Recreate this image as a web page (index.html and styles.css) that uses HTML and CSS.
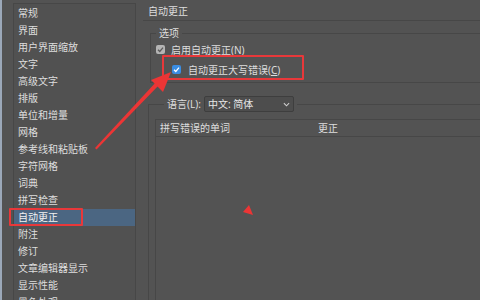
FILE: index.html
```html
<!DOCTYPE html>
<html lang="zh-CN">
<head>
  <meta charset="UTF-8">
  <title>首选项 - 自动更正</title>
  <link rel="stylesheet" href="styles.css">
</head>
<body>
  <div class="prefs">
    <div class="edge"></div>
    <ul class="sidebar">
      <li>常规</li>
      <li>界面</li>
      <li>用户界面缩放</li>
      <li>文字</li>
      <li>高级文字</li>
      <li>排版</li>
      <li>单位和增量</li>
      <li>网格</li>
      <li>参考线和粘贴板</li>
      <li>字符网格</li>
      <li>词典</li>
      <li>拼写检查</li>
      <li class="active">自动更正</li>
      <li>附注</li>
      <li>修订</li>
      <li>文章编辑器显示</li>
      <li>显示性能</li>
      <li>黑色外观</li>
    </ul>
    <div class="main">
      <div class="title">自动更正</div>
      <fieldset class="group options">
        <legend>选项</legend>
        <label class="check-row">
          <span class="box box-gray"><svg viewBox="0 0 10 10"><path d="M2.2 5.2 L4.2 7.2 L7.8 3" /></svg></span>
          <span>启用自动更正(<u>N</u>)</span>
        </label>
        <label class="check-row indent">
          <span class="box box-blue"><svg viewBox="0 0 10 10"><path d="M2.2 5.2 L4.2 7.2 L7.8 3" /></svg></span>
          <span>自动更正大写错误(<u>C</u>)</span>
        </label>
      </fieldset>
      <fieldset class="group words">
        <legend>
          <span class="lang-label">语言(L):</span>
          <span class="select">中文: 简体
            <svg class="chev" viewBox="0 0 8 5"><path d="M1 1 L4 4 L7 1" /></svg>
          </span>
        </legend>
        <div class="table">
          <div class="thead">
            <span class="col-word">拼写错误的单词</span>
            <span class="col-fix">更正</span>
          </div>
        </div>
      </fieldset>
    </div>
  </div>

  <div class="mark-box mark-side"></div>
  <div class="mark-box mark-check"></div>
  <svg class="marks" viewBox="0 0 480 300" width="480" height="300">
    <polygon points="95,148 96.5,149.5 160,84 157,81" />
    <polygon points="171,72 151,80 163,92" />
    <polygon points="243,212 249,205 253,215" />
  </svg>
</body>
</html>
```

FILE: styles.css
```css
html, body {
  margin: 0;
  padding: 0;
  height: 100%;
}
body {
  background: #535353;
  color: #dedede;
  font-family: "Noto Sans", "Noto Sans CJK SC", sans-serif;
  font-size: 10px;
  overflow: hidden;
}
.prefs {
  display: flex;
  height: 300px;
}
.edge {
  width: 2px;
  background: #9ba8b9;
}

/* left list */
.sidebar {
  list-style: none;
  margin: 3px 0 0 11px;
  padding: 1px 0 0 0;
  width: 121px;
  border: 1px solid #474747;
  border-bottom: none;
  background: #515151;
  overflow: hidden;
}
.sidebar li {
  height: 17px;
  line-height: 17px;
  padding-left: 4px;
  white-space: nowrap;
}
.sidebar li.active {
  background: #4b6682;
  color: #f2f2f2;
}

/* right pane */
.main {
  flex: 1;
  padding-left: 7px;
  min-width: 0;
  overflow: hidden;
}
.title {
  height: 20px;
  line-height: 22px;
  padding-left: 5px;
  border-bottom: 1px solid #474747;
}
.group {
  border: 1px solid #474747;
  margin: 0 -30px 0 7px;
  padding: 0;
  min-width: 0;
}
.group legend {
  padding: 0 3px;
  line-height: 14px;
}
.options {
  margin-top: 5px;
  padding: 1px 0 5px 5px;
}
.options legend {
  margin-left: 0;
}
.check-row {
  display: flex;
  align-items: center;
  gap: 6px;
  height: 16px;
}
.check-row.indent {
  margin-top: 4px;
  padding-left: 16px;
  gap: 7px;
}
.check-row u {
  text-decoration-thickness: 1px;
  text-underline-offset: 1px;
}
.box {
  width: 9px;
  height: 9px;
  border-radius: 2px;
  display: flex;
}
.box svg {
  width: 9px;
  height: 9px;
  fill: none;
  stroke-width: 1.4;
}
.box-gray {
  background: #b4b4b4;
}
.box-gray svg {
  stroke: #5a5a5a;
}
.box-blue {
  background: #3a8de3;
}
.box-blue svg {
  stroke: #ffffff;
}

.words {
  margin-top: 13px;
  margin-left: 5px;
  height: 300px;
  padding: 0 0 0 6px;
}
.words legend {
  margin-left: 9px;
  display: flex;
  align-items: center;
  gap: 3px;
  padding: 0 3px;
}
.select {
  display: flex;
  align-items: center;
  width: 82px;
  height: 14px;
  padding: 0 3px;
  border: 1px solid #3e3e3e;
  border-radius: 2px;
  background: #4d4d4d;
  color: #e6e6e6;
}
.chev {
  width: 7px;
  height: 5px;
  margin-left: auto;
  fill: none;
  stroke: #cfcfcf;
  stroke-width: 1.2;
}
.table {
  margin-top: 7px;
  border-left: 1px solid #474747;
  height: 300px;
}
.thead {
  display: flex;
  height: 16px;
  line-height: 16px;
  border-top: 1px solid #474747;
  border-bottom: 1px solid #474747;
}
.col-word {
  width: 158px;
  padding-left: 4px;
}

/* red annotations */
.mark-box {
  position: absolute;
  border: 2px solid #e8383a;
  border-radius: 1px;
}
.mark-side {
  left: 9px;
  top: 208px;
  width: 70px;
  height: 14px;
}
.mark-check {
  left: 162px;
  top: 55px;
  width: 138px;
  height: 21px;
}
.marks {
  position: absolute;
  left: 0;
  top: 0;
  pointer-events: none;
}
.marks polygon {
  fill: #ec3535;
}
```
